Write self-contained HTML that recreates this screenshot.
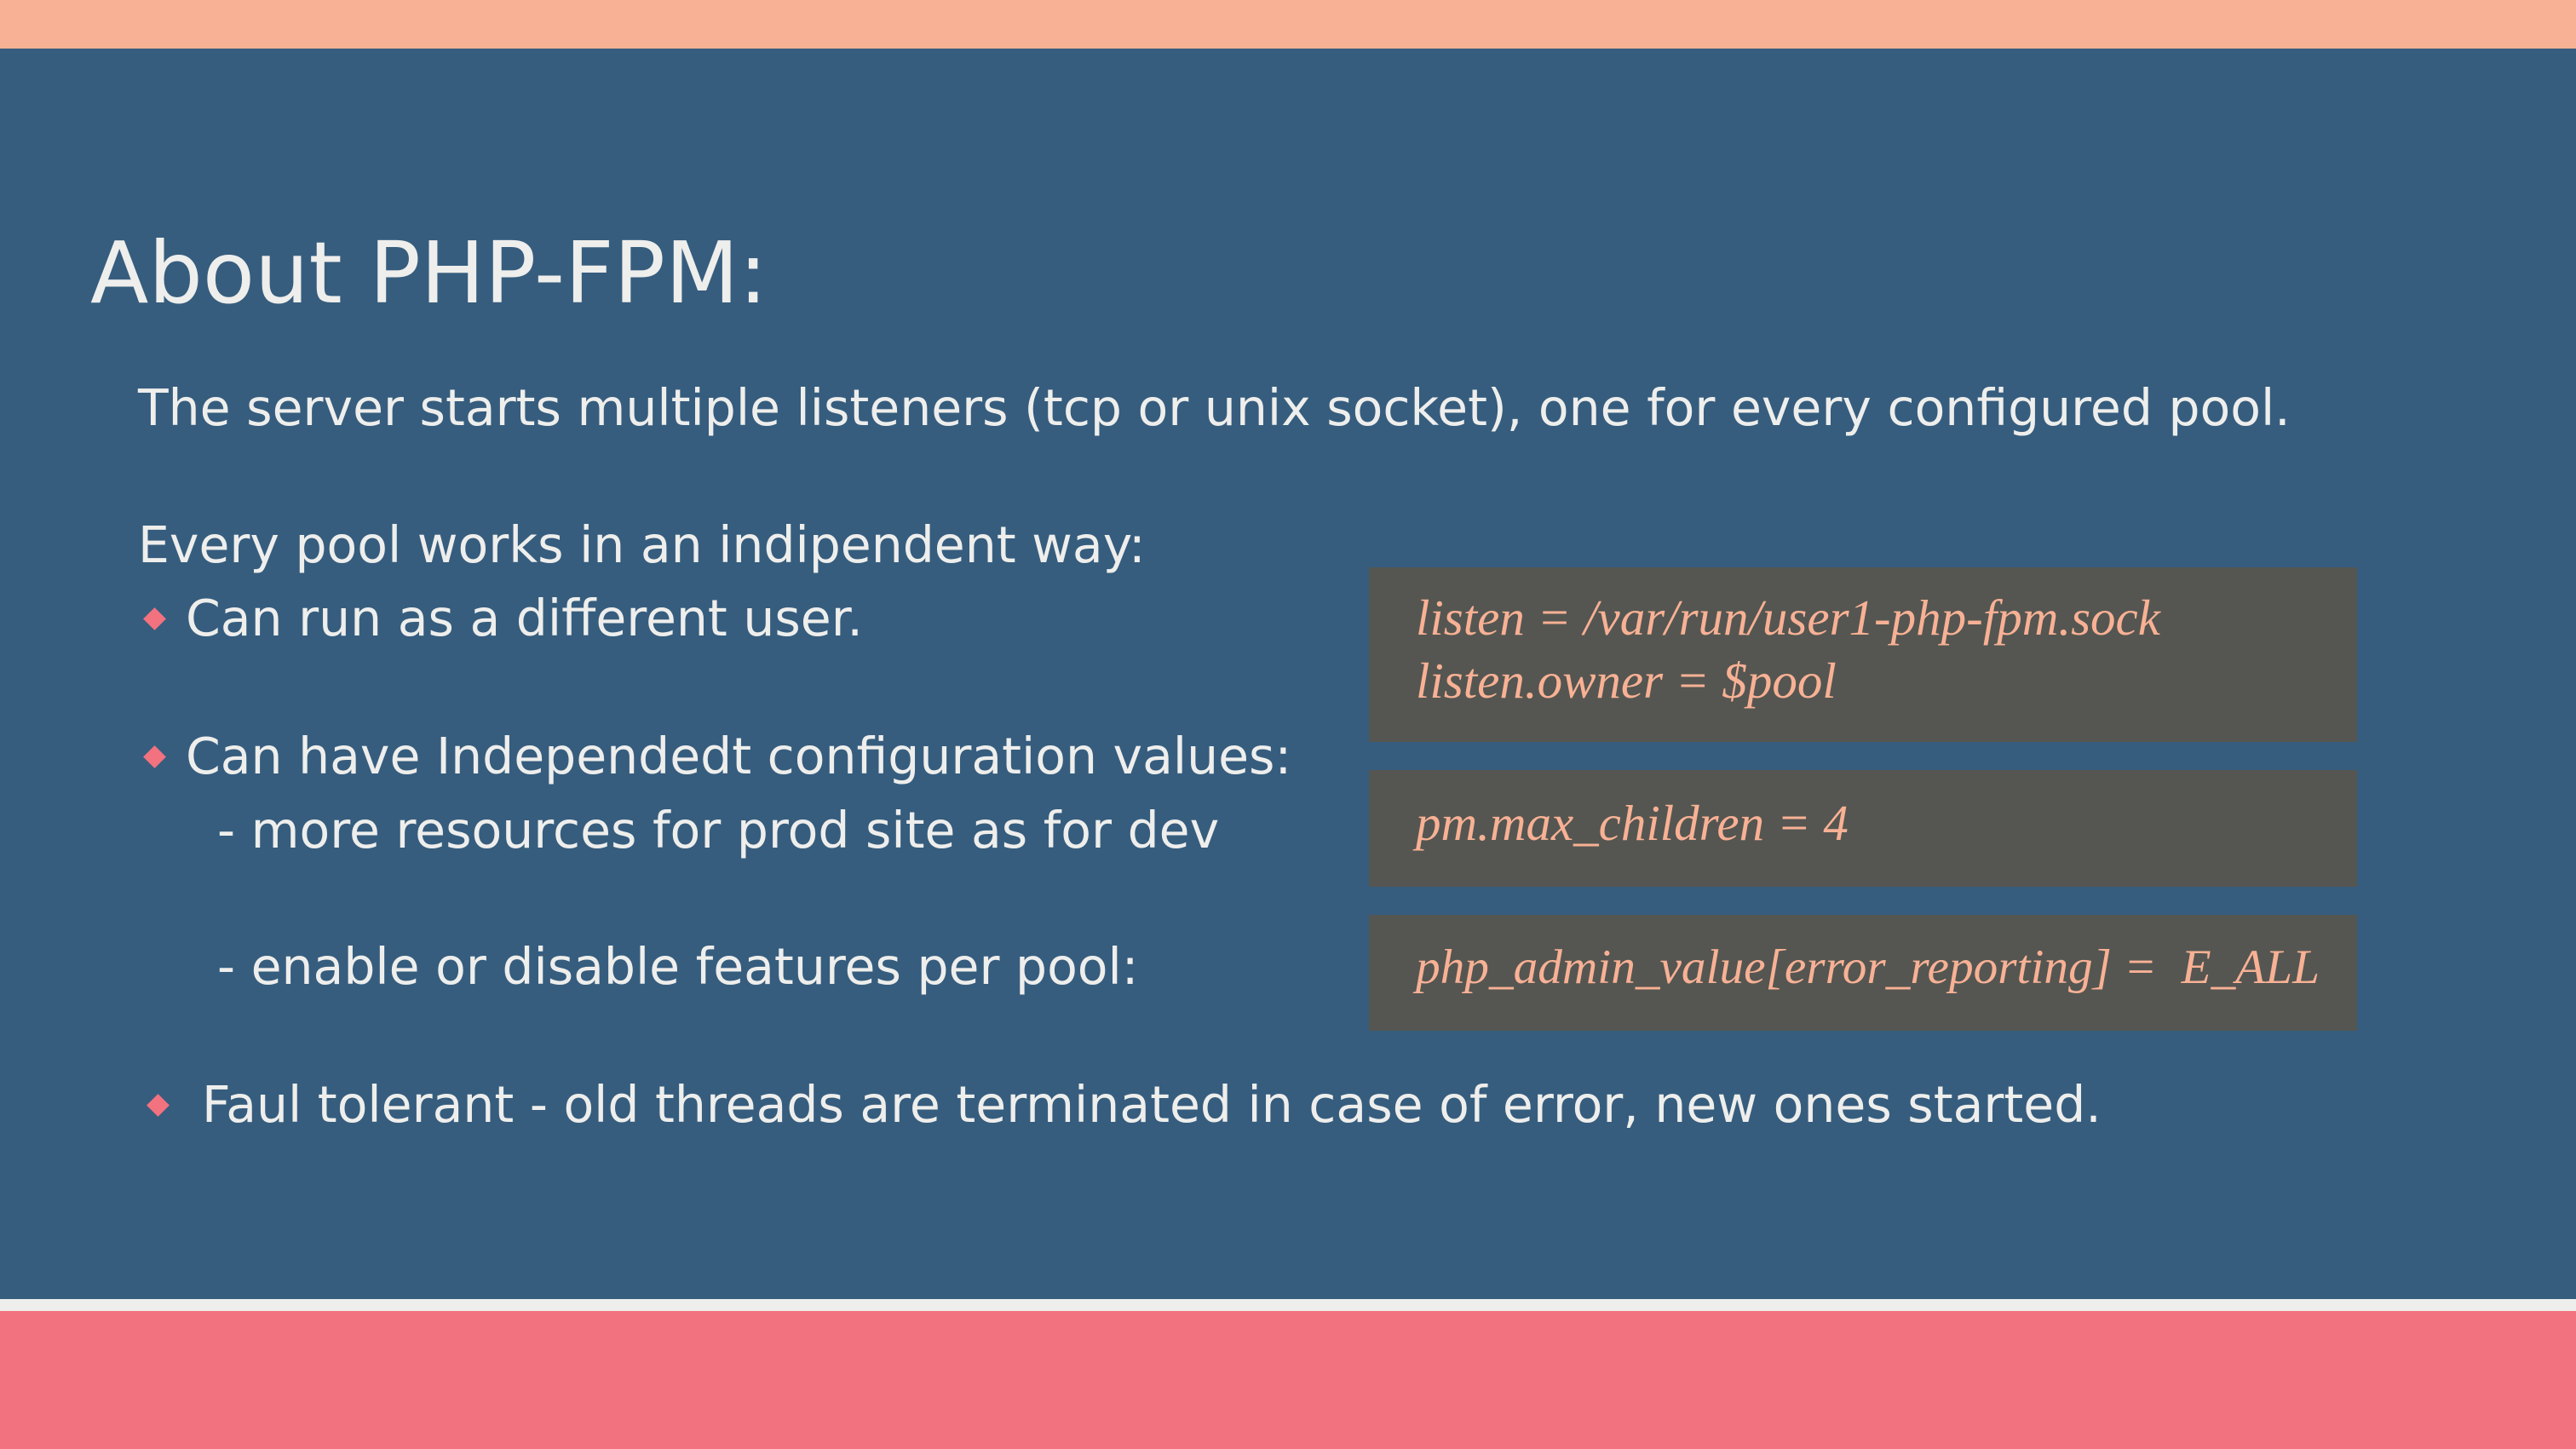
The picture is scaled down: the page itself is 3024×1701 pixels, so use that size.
<!DOCTYPE html>
<html><head><meta charset="utf-8"><style>
html,body{margin:0;padding:0}
body{width:3024px;height:1701px;position:relative;overflow:hidden;background:#365d7e;font-family:"DejaVu Sans","Liberation Sans",sans-serif;color:#eeeeec}
.t{position:absolute;white-space:nowrap;line-height:1;font-size:58.4px}
.d{position:absolute;width:19px;height:19px;background:#f2727f;transform:rotate(45deg)}
.box{position:absolute;left:1607px;width:1160px;background:#555651}
.c{position:absolute;white-space:nowrap;line-height:1;font-family:"Liberation Serif",serif;font-style:italic;font-size:59px;color:#f8b195;left:1662px}
</style></head><body>
<div style="position:absolute;left:0;top:0;width:3024px;height:57px;background:#f8b195"></div>
<div style="position:absolute;left:0;top:1525px;width:3024px;height:14px;background:#eeeeec"></div>
<div style="position:absolute;left:0;top:1539px;width:3024px;height:162px;background:#f2727f"></div>

<div class="t" style="font-size:100px;left:106px;top:271px">About PHP-FPM:</div>
<div class="t" style="left:162px;top:450px">The server starts multiple listeners (tcp or unix socket), one for every configured pool.</div>
<div class="t" style="left:162px;top:611px">Every pool works in an indipendent way:</div>
<div class="d" style="left:172px;top:717px"></div>
<div class="t" style="left:218px;top:697px">Can run as a different user.</div>
<div class="d" style="left:172px;top:879px"></div>
<div class="t" style="left:218px;top:859px">Can have Independedt configuration values:</div>
<div class="t" style="left:255px;top:946px">- more resources for prod site as for dev</div>
<div class="t" style="left:255px;top:1106px">- enable or disable features per pool:</div>
<div class="d" style="left:176px;top:1288px"></div>
<div class="t" style="left:237px;top:1268px">Faul tolerant - old threads are terminated in case of error, new ones started.</div>

<div class="box" style="top:666px;height:205px"></div>
<div class="box" style="top:904px;height:137px"></div>
<div class="box" style="top:1074px;height:136px"></div>
<div class="c" style="top:696px">listen = /var/run/user1-php-fpm.sock</div>
<div class="c" style="top:770px">listen.owner = $pool</div>
<div class="c" style="top:937px">pm.max_children = 4</div>
<div class="c" style="top:1107px;font-size:57.3px">php_admin_value[error_reporting] =&nbsp; E_ALL</div>
</body></html>
